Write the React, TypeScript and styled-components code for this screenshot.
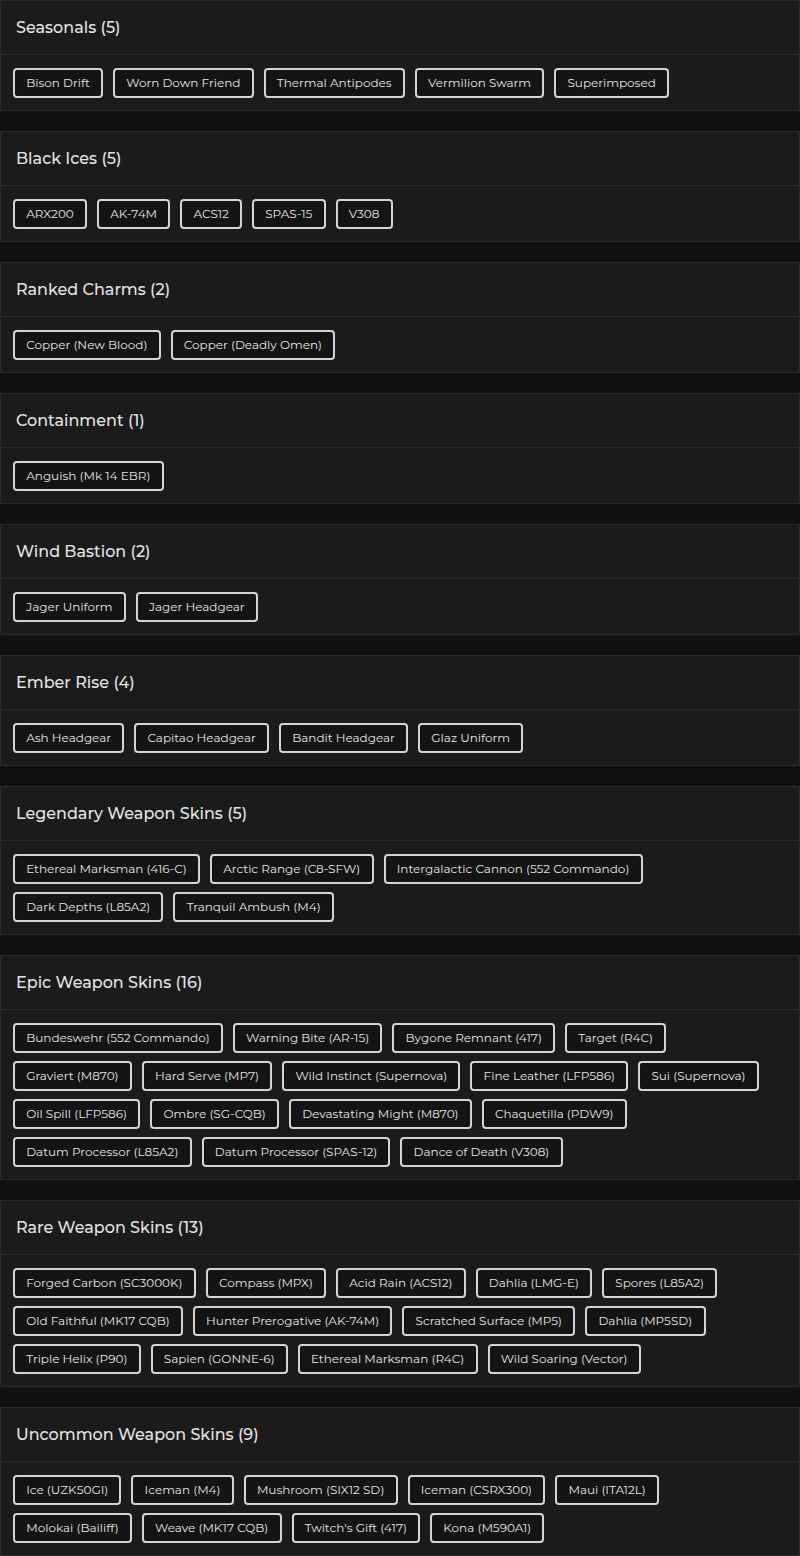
import React from "react";
import styled, { createGlobalStyle } from "styled-components";

const Global = createGlobalStyle`
  html, body { margin: 0; padding: 0; background: #111111; }
  body { font-family: "Montserrat", Inter, "Noto Sans", sans-serif; }
`;

const Page = styled.div`
  display: flex;
  flex-direction: column;
  gap: 20px;
  width: 800px;
`;

const Card = styled.section`
  background: #1b1b1b;
  border: 1px solid #2a2a2a;
`;

const Header = styled.div`
  height: 53px;
  display: flex;
  align-items: center;
  padding-left: 15px;
  border-bottom: 1px solid #2a2a2a;
`;

const Title = styled.h2`
  margin: 0;
  font-size: 16px;
  font-weight: 500;
  color: #e4e4e4;
`;

const Body = styled.div`
  display: flex;
  flex-wrap: wrap;
  gap: 8px 10px;
  padding: 13px 12px 12px 12px;
`;

const Chip = styled.span`
  box-sizing: border-box;
  height: 30px;
  display: inline-flex;
  align-items: center;
  padding: 0 11.2px 2px;
  border: 2px solid #d4d4d4;
  border-radius: 4px;
  background: #141414;
  color: #e4e4e4;
  font-size: 12px;
  white-space: nowrap;
`;

const groups: { title: string; items: string[] }[] = [
  { title: "Seasonals", items: ["Bison Drift", "Worn Down Friend", "Thermal Antipodes", "Vermilion Swarm", "Superimposed"] },
  { title: "Black Ices", items: ["ARX200", "AK-74M", "ACS12", "SPAS-15", "V308"] },
  { title: "Ranked Charms", items: ["Copper (New Blood)", "Copper (Deadly Omen)"] },
  { title: "Containment", items: ["Anguish (Mk 14 EBR)"] },
  { title: "Wind Bastion", items: ["Jager Uniform", "Jager Headgear"] },
  { title: "Ember Rise", items: ["Ash Headgear", "Capitao Headgear", "Bandit Headgear", "Glaz Uniform"] },
  {
    title: "Legendary Weapon Skins",
    items: ["Ethereal Marksman (416-C)", "Arctic Range (C8-SFW)", "Intergalactic Cannon (552 Commando)", "Dark Depths (L85A2)", "Tranquil Ambush (M4)"],
  },
  {
    title: "Epic Weapon Skins",
    items: [
      "Bundeswehr (552 Commando)", "Warning Bite (AR-15)", "Bygone Remnant (417)", "Target (R4C)",
      "Graviert (M870)", "Hard Serve (MP7)", "Wild Instinct (Supernova)", "Fine Leather (LFP586)", "Sui (Supernova)",
      "Oil Spill (LFP586)", "Ombre (SG-CQB)", "Devastating Might (M870)", "Chaquetilla (PDW9)",
      "Datum Processor (L85A2)", "Datum Processor (SPAS-12)", "Dance of Death (V308)",
    ],
  },
  {
    title: "Rare Weapon Skins",
    items: [
      "Forged Carbon (SC3000K)", "Compass (MPX)", "Acid Rain (ACS12)", "Dahlia (LMG-E)", "Spores (L85A2)",
      "Old Faithful (MK17 CQB)", "Hunter Prerogative (AK-74M)", "Scratched Surface (MP5)", "Dahlia (MP5SD)",
      "Triple Helix (P90)", "Sapien (GONNE-6)", "Ethereal Marksman (R4C)", "Wild Soaring (Vector)",
    ],
  },
  {
    title: "Uncommon Weapon Skins",
    items: [
      "Ice (UZK50GI)", "Iceman (M4)", "Mushroom (SIX12 SD)", "Iceman (CSRX300)", "Maui (ITA12L)",
      "Molokai (Bailiff)", "Weave (MK17 CQB)", "Twitch's Gift (417)", "Kona (M590A1)",
    ],
  },
];

export default function App() {
  return (
    <>
      <Global />
      <Page>
        {groups.map((g) => (
          <Card key={g.title}>
            <Header>
              <Title>
                {g.title} ({g.items.length})
              </Title>
            </Header>
            <Body>
              {g.items.map((it) => (
                <Chip key={it}>{it}</Chip>
              ))}
            </Body>
          </Card>
        ))}
      </Page>
    </>
  );
}
